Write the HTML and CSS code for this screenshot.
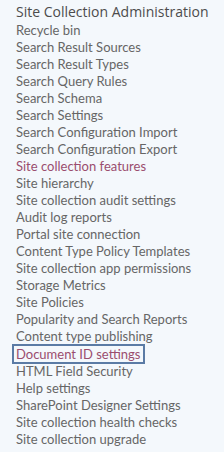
FILE: index.html
```html
<!DOCTYPE html>
<html lang="en">
<head>
  <meta charset="UTF-8" />
  <title>Site Collection Administration</title>
  <link rel="stylesheet" href="styles.css">
</head>
<body>

  <div class="section">
    <h2>Site Collection Administration</h2>
    <ul class="links">
      <li><a href="#">Recycle bin</a></li>
      <li><a href="#">Search Result Sources</a></li>
      <li><a href="#">Search Result Types</a></li>
      <li><a href="#">Search Query Rules</a></li>
      <li><a href="#">Search Schema</a></li>
      <li><a href="#">Search Settings</a></li>
      <li><a href="#">Search Configuration Import</a></li>
      <li><a href="#">Search Configuration Export</a></li>
      <li><a href="#" class="visited">Site collection features</a></li>
      <li><a href="#">Site hierarchy</a></li>
      <li><a href="#">Site collection audit settings</a></li>
      <li><a href="#">Audit log reports</a></li>
      <li><a href="#">Portal site connection</a></li>
      <li><a href="#">Content Type Policy Templates</a></li>
      <li><a href="#">Site collection app permissions</a></li>
      <li><a href="#">Storage Metrics</a></li>
      <li><a href="#">Site Policies</a></li>
      <li><a href="#">Popularity and Search Reports</a></li>
      <li><a href="#">Content type publishing</a></li>
      <li><a href="#" class="visited focused">Document ID settings</a></li>
      <li><a href="#">HTML Field Security</a></li>
      <li><a href="#">Help settings</a></li>
      <li><a href="#">SharePoint Designer Settings</a></li>
      <li><a href="#">Site collection health checks</a></li>
      <li><a href="#">Site collection upgrade</a></li>
    </ul>
  </div>

</body>
</html>
```

FILE: styles.css
```css
body {
  margin: 0;
  background: #f4f8fc;
  font-family: Lato, "Open Sans", sans-serif;
  color: #555;
}

.section {
  padding: 2px 0 0 16px;
}

h2 {
  margin: 0;
  font-family: "Open Sans", sans-serif;
  font-size: 14px;
  font-weight: normal;
  line-height: 20px;
  white-space: nowrap;
  color: #4c4c4c;
}

.links {
  list-style: none;
  margin: 0;
  padding: 0;
}

.links li {
  line-height: 17px;
  font-size: 13px;
}

.links a {
  color: #666;
  text-decoration: none;
}

.links a.visited {
  color: #9a4d6e;
}

.links a.focused {
  display: inline-block;
  margin: -1px 0 -1px -4px;
  padding: 0 3px 0 2px;
  border: 2px solid #5b7ba5;
  line-height: 16px;
}
```
